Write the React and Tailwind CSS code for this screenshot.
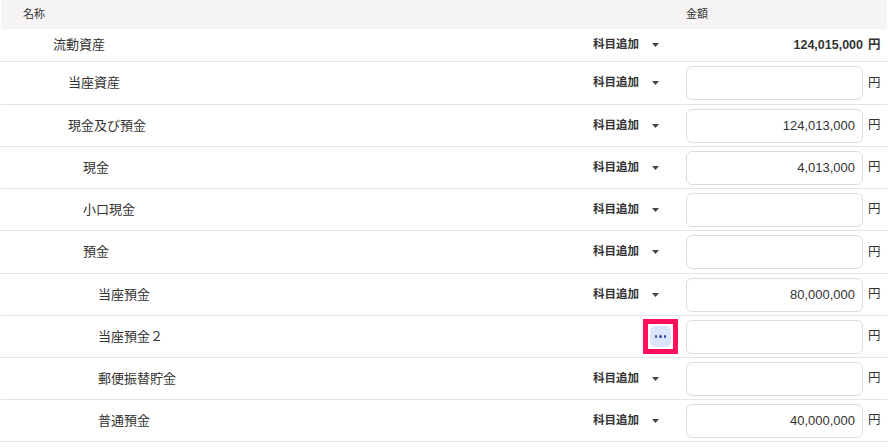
import React from "react";

const rows = [
  { name: "当座資産", level: 1, value: "", h: "h-[43px]" },
  { name: "現金及び預金", level: 1, value: "124,013,000", h: "h-[42px]" },
  { name: "現金", level: 2, value: "4,013,000", h: "h-[42px]" },
  { name: "小口現金", level: 2, value: "", h: "h-[42px]" },
  { name: "預金", level: 2, value: "", h: "h-[43px]" },
  { name: "当座預金", level: 3, value: "80,000,000", h: "h-[42px]" },
  { name: "当座預金２", level: 3, value: "", h: "h-[42px]", menu: true },
  { name: "郵便振替貯金", level: 3, value: "", h: "h-[42px]" },
  { name: "普通預金", level: 3, value: "40,000,000", h: "h-[42px]" },
];

const indent = ["pl-[53px]", "pl-[68px]", "pl-[83px]", "pl-[98px]"];

const Caret = () => (
  <svg width="7" height="4" viewBox="0 0 7 4" className="ml-[13px] shrink-0">
    <path d="M0 0 L7 0 L3.5 4 Z" fill="#444" />
  </svg>
);

const AddAccount = () => (
  <div className="flex items-center mr-[27px] shrink-0">
    <span className="text-[11.5px] font-bold text-[#333]">科目追加</span>
    <Caret />
  </div>
);

const MenuButton = () => (
  <div className="mr-[8px] shrink-0 border-[5px] border-[#ff0f5c] p-[2px] bg-white">
    <div className="w-[21px] h-[21px] rounded-[5px] bg-[#dbe6fc] flex items-center justify-center gap-[2px]">
      <span className="w-[2.5px] h-[2.5px] rounded-full bg-[#2a4a9c]" />
      <span className="w-[2.5px] h-[2.5px] rounded-full bg-[#2a4a9c]" />
      <span className="w-[2.5px] h-[2.5px] rounded-full bg-[#2a4a9c]" />
    </div>
  </div>
);

export default function App() {
  return (
    <div
      className="w-[891px] h-[447px] bg-white text-[#333]"
      style={{ fontFamily: '"Liberation Sans", "Noto Sans CJK JP", sans-serif' }}
    >
      <div className="w-[886px] ml-px">
        {/* header */}
        <div className="h-[29px] bg-[#f5f3f4] flex items-center text-[11px]">
          <span className="pl-[22px] flex-1">名称</span>
          <span className="w-[201px]">金額</span>
        </div>

        {/* total row */}
        <div className="h-[33px] border-b border-[#e5e5e5] flex items-center text-[13px]">
          <span className="flex-1 pl-[52px]">流動資産</span>
          <AddAccount />
          <span className="w-[177px] shrink-0 text-right font-bold text-[12.5px]">124,015,000</span>
          <span className="ml-[5px] w-[12px] shrink-0 font-bold text-[12.5px]">円</span>
          <span className="w-[7px] shrink-0" />
        </div>

        {rows.map((row) => (
          <div
            key={row.name}
            className={`${row.h} border-b border-[#e5e5e5] flex items-center text-[13px]`}
          >
            <span className={`flex-1 ${indent[row.level]} -ml-px`}>{row.name}</span>
            {row.menu ? <MenuButton /> : <AddAccount />}
            <input
              readOnly
              value={row.value}
              className="w-[177px] shrink-0 h-[34px] border border-[#dcdcdc] rounded-[6px] bg-white text-right pr-[7px] text-[13px] text-[#333] outline-none"
              style={{ fontFamily: '"Liberation Sans", sans-serif' }}
            />
            <span className="ml-[5px] w-[12px] shrink-0 text-[12.5px]">円</span>
            <span className="w-[7px] shrink-0" />
          </div>
        ))}
      </div>
    </div>
  );
}
